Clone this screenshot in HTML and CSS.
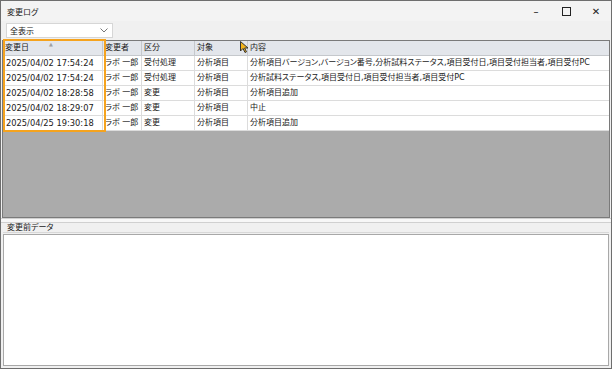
FILE: index.html
```html
<!DOCTYPE html>
<html lang="ja">
<head>
    <meta charset="UTF-8">
    <title>変更ログ</title>
    <link rel="stylesheet" href="styles.css">
</head>
<body>
    <div class="window">
        <div class="titlebar">
            <span class="title">変更ログ</span>
            <div class="controls">
                <span class="ctl">&#8211;</span>
                <span class="ctl"><span class="box"></span></span>
                <span class="ctl">&#x2715;</span>
            </div>
        </div>
        <div class="toolbar">
            <div class="combo">
                <span>全表示</span>
                <svg width="8" height="5" viewBox="0 0 8 5"><path d="M0.5 0.5 L4 4 L7.5 0.5" fill="none" stroke="#777" stroke-width="1"/></svg>
            </div>
        </div>
        <div class="grid">
            <div class="rows">
                <div class="row head">
                    <div class="cell">変更日<span class="sort">&#9650;</span></div>
                    <div class="cell">変更者</div>
                    <div class="cell">区分</div>
                    <div class="cell">対象</div>
                    <div class="cell">内容</div>
                </div>
                <div class="row">
                    <div class="cell date">2025/04/02 17:54:24</div>
                    <div class="cell">ラボ 一郎</div>
                    <div class="cell">受付処理</div>
                    <div class="cell">分析項目</div>
                    <div class="cell">分析項目バージョン,バージョン番号,分析試料ステータス,項目受付日,項目受付担当者,項目受付PC</div>
                </div>
                <div class="row">
                    <div class="cell date">2025/04/02 17:54:24</div>
                    <div class="cell">ラボ 一郎</div>
                    <div class="cell">受付処理</div>
                    <div class="cell">分析項目</div>
                    <div class="cell">分析試料ステータス,項目受付日,項目受付担当者,項目受付PC</div>
                </div>
                <div class="row">
                    <div class="cell date">2025/04/02 18:28:58</div>
                    <div class="cell">ラボ 一郎</div>
                    <div class="cell">変更</div>
                    <div class="cell">分析項目</div>
                    <div class="cell">分析項目追加</div>
                </div>
                <div class="row">
                    <div class="cell date">2025/04/02 18:29:07</div>
                    <div class="cell">ラボ 一郎</div>
                    <div class="cell">変更</div>
                    <div class="cell">分析項目</div>
                    <div class="cell">中止</div>
                </div>
                <div class="row">
                    <div class="cell date">2025/04/25 19:30:18</div>
                    <div class="cell">ラボ 一郎</div>
                    <div class="cell">変更</div>
                    <div class="cell">分析項目</div>
                    <div class="cell">分析項目追加</div>
                </div>
            </div>
            <div class="highlight"></div>
            <svg class="cursor" width="9" height="12" viewBox="0 0 9 12"><path d="M0.5 0.5 L0.5 10 L3 7.5 L5 11.5 L6.5 10.8 L4.6 7 L8 7 Z" fill="#f2b31c" stroke="#333" stroke-width="1"/></svg>
        </div>
        <div class="splitter"></div>
        <div class="detail">
            <div class="label">変更前データ</div>
            <div class="textbox"></div>
        </div>
    </div>
</body>
</html>
```

FILE: styles.css
```css
body {
    margin: 0;
    font-family: "DejaVu Sans", "Noto Sans CJK JP", sans-serif;
    font-size: 8px;
    color: #1a1a1a;
    background: #3a3a3a;
    font-feature-settings: "palt";
}
.window {
    width: 610px;
    height: 367px;
    border: 1px solid #6e6e6e;
    background: #f0f0f0;
    display: flex;
    flex-direction: column;
    overflow: hidden;
}
.titlebar {
    height: 20px;
    display: flex;
    align-items: center;
    justify-content: space-between;
    background: #f3f3f3;
    padding-left: 6px;
}
.controls {
    display: flex;
    height: 100%;
}
.ctl {
    width: 30px;
    display: flex;
    align-items: center;
    justify-content: center;
    font-size: 10px;
    color: #222;
}
.box {
    width: 7px;
    height: 7px;
    border: 1px solid #222;
}
.toolbar {
    height: 19px;
    padding-left: 5px;
    display: flex;
    align-items: center;
}
.combo {
    width: 107px;
    height: 15px;
    box-sizing: border-box;
    background: #fff;
    border: 1px solid #d6d6d6;
    display: flex;
    align-items: center;
    justify-content: space-between;
    padding: 0 4px 0 3px;
}
.grid {
    position: relative;
    height: 176px;
    margin: 0 1px;
    background: #ababab;
    border: 1px solid #7a7a7a;
}
.row {
    display: grid;
    grid-template-columns: 100px 39px 53px 53px 1fr;
    height: 15px;
    background: #fff;
    border-bottom: 1px solid #dcdcdc;
    box-sizing: border-box;
}
.row.head {
    background: #e3e6eb;
    border-bottom: 1px solid #c5c8cc;
}
.cell {
    position: relative;
    padding-left: 2px;
    line-height: 14px;
    white-space: nowrap;
    overflow: hidden;
    border-right: 1px solid #dcdcdc;
}
.cell.date {
    padding-left: 3px;
    font-size: 8.3px;
}
.head .cell {
    border-right-color: #c5c8cc;
}
.cell:last-child {
    border-right: none;
}
.sort {
    position: absolute;
    left: 46px;
    top: -4px;
    font-size: 5px;
    color: #a0a0a0;
}
.highlight {
    position: absolute;
    left: 0;
    top: -2px;
    width: 99px;
    height: 89px;
    border: 2px solid #f5a31e;
}
.cursor {
    position: absolute;
    left: 237px;
    top: 0;
}
.splitter {
    height: 3px;
    border-top: 1px solid #d0d0d0;
    border-bottom: 1px solid #d0d0d0;
    background: #f7f7f7;
}
.detail {
    flex: 1;
    padding: 0 2px 2px 2px;
    display: flex;
    flex-direction: column;
}
.label {
    height: 9px;
    line-height: 9px;
    padding-left: 4px;
    border-bottom: 1px solid #d8d8d8;
}
.textbox {
    flex: 1;
    margin-top: 1px;
    background: #fff;
    border: 1px solid #a8a8a8;
}
```
